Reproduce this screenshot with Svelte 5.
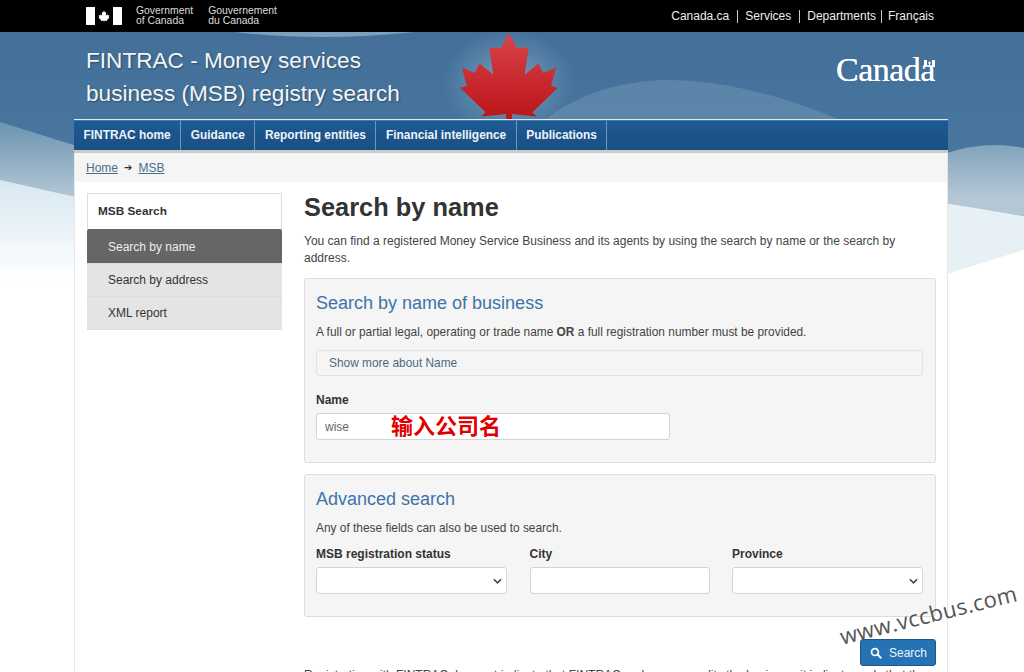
<script>
	// Top links and nav items for the FINTRAC search page
	const topLinks = ['Canada.ca', 'Services', 'Departments', 'Français'];
	const navItems = ['FINTRAC home', 'Guidance', 'Reporting entities', 'Financial intelligence', 'Publications'];
	const sideItems = ['Search by name', 'Search by address', 'XML report'];
	const leaf =
		'M50 0 L58 17 L70 17 L66 48 L80 35 L85 46 L98 40 L93 61 L100 63 L74 91 L78 96 L53 93 L53 100 L47 100 L47 93 L22 96 L26 91 L0 63 L7 61 L2 40 L15 46 L20 35 L34 48 L30 17 L42 17 Z';
</script>

<div class="page">
	<svg class="backdrop" viewBox="0 0 1024 250" aria-hidden="true">
		<defs>
			<linearGradient id="sky" x1="0" y1="0" x2="0" y2="1">
				<stop offset="0" stop-color="#436f98" />
				<stop offset="1" stop-color="#4b7ba2" />
			</linearGradient>
			<linearGradient id="band" gradientUnits="userSpaceOnUse" x1="0" y1="90" x2="0" y2="165">
				<stop offset="0" stop-color="#6b94b1" />
				<stop offset="1" stop-color="#b4c7d4" />
			</linearGradient>
			<linearGradient id="mist" gradientUnits="userSpaceOnUse" x1="0" y1="150" x2="0" y2="250">
				<stop offset="0" stop-color="#d8e8f2" />
				<stop offset="1" stop-color="#ffffff" />
			</linearGradient>
			<radialGradient id="glow">
				<stop offset="0" stop-color="#a8cbe2" stop-opacity="0.5" />
				<stop offset="1" stop-color="#a8cbe2" stop-opacity="0" />
			</radialGradient>
		</defs>
		<rect width="1024" height="190" fill="url(#sky)" />
		<ellipse cx="509" cy="50" rx="66" ry="54" fill="url(#glow)" />
		<path d="M235 0 Q320 10 415 0 Z" fill="#8eb2cc" opacity="0.75" />
		<path d="M545 88 Q590 52 660 48 Q740 46 840 88 Z" fill="#8db0ca" opacity="0.3" />
		<path d="M0 90 L80 115 L80 170 L0 150 Z" fill="url(#band)" />
		<path d="M0 148 L80 166 L80 250 L0 250 Z" fill="url(#mist)" />
		<path d="M944 122 Q985 108 1024 116 L1024 184 L944 172 Z" fill="url(#band)" />
		<path d="M944 171 L1024 184 L1024 218 L944 243 Z" fill="#e7f0f5" />
		<path d="M944 243 L1024 218 L1024 250 L944 250 Z" fill="#fff" />
	</svg>

	<div class="topbar">
		<div class="gov">
			<svg class="flag" viewBox="0 0 36 18" aria-hidden="true">
				<rect x="0" y="0" width="9" height="18" fill="#fff" />
				<rect x="27" y="0" width="9" height="18" fill="#fff" />
				<path d={leaf} fill="#fff" transform="translate(12.5 3.5) scale(0.11)" />
			</svg>
			<span>Government<br />of Canada</span>
			<span>Gouvernement<br />du Canada</span>
		</div>
		<ul class="toplinks">
			{#each topLinks as link}
				<li>{link}</li>
			{/each}
		</ul>
	</div>

	<header class="banner">
		<h2>FINTRAC - Money services<br />business (MSB) registry search</h2>
		<svg class="bigleaf" viewBox="0 0 100 100" preserveAspectRatio="none" aria-hidden="true">
			<defs>
				<linearGradient id="red" x1="0" y1="0" x2="0" y2="1">
					<stop offset="0" stop-color="#d8444a" />
					<stop offset="1" stop-color="#bb1418" />
				</linearGradient>
			</defs>
			<path d={leaf} fill="url(#red)" />
		</svg>
		<div class="wordmark">
			Canada
			<svg class="wordflag" viewBox="0 0 11 7" aria-hidden="true">
				<rect width="3" height="7" fill="#fff" />
				<rect x="8" width="3" height="7" fill="#fff" />
				<path d="M5.5 1 L7.2 3.5 L6 3.5 L6 6 L5 6 L5 3.5 L3.8 3.5 Z" fill="#fff" />
			</svg>
		</div>
	</header>

	<div class="shell">
		<nav class="mainnav">
			{#each navItems as item}
				<a href="#top">{item}</a>
			{/each}
		</nav>
		<div class="crumbs">
			<a href="#top">Home</a>
			<span class="arrow">➔</span>
			<a href="#top">MSB</a>
		</div>

		<div class="content">
			<aside class="side">
				<div class="side-title">MSB Search</div>
				{#each sideItems as item, i}
					<div class="side-item" class:active={i === 0}>{item}</div>
				{/each}
			</aside>

			<main>
				<h1>Search by name</h1>
				<p class="intro">
					You can find a registered Money Service Business and its agents by using the search by name or the search by address.
				</p>

				<section class="well first">
					<h3>Search by name of business</h3>
					<p>A full or partial legal, operating or trade name <b>OR</b> a full registration number must be provided.</p>
					<div class="more">Show more about Name</div>
					<label for="name">Name</label>
					<div class="name-wrap">
						<input id="name" type="text" value="wise" />
						<span class="note">输入公司名</span>
					</div>
				</section>

				<section class="well second">
					<h3>Advanced search</h3>
					<p>Any of these fields can also be used to search.</p>
					<div class="fields">
						<div class="field">
							<label for="status">MSB registration status</label>
							<div class="select-wrap">
								<select id="status"><option></option></select>
								<svg class="chevron" viewBox="0 0 10 6" aria-hidden="true">
									<path d="M1 1 L5 5 L9 1" fill="none" stroke="#444" stroke-width="1.7" />
								</svg>
							</div>
						</div>
						<div class="field">
							<label for="city">City</label>
							<input id="city" type="text" />
						</div>
						<div class="field">
							<label for="province">Province</label>
							<div class="select-wrap">
								<select id="province"><option></option></select>
								<svg class="chevron" viewBox="0 0 10 6" aria-hidden="true">
									<path d="M1 1 L5 5 L9 1" fill="none" stroke="#444" stroke-width="1.7" />
								</svg>
							</div>
						</div>
					</div>
				</section>

				<div class="actions">
					<button type="button">
						<svg viewBox="0 0 14 14" aria-hidden="true">
							<circle cx="5.8" cy="5.8" r="4" fill="none" stroke="#fff" stroke-width="2" />
							<path d="M8.8 8.8 L12.4 12.4" stroke="#fff" stroke-width="2.4" stroke-linecap="round" />
						</svg>
						Search
					</button>
				</div>
				<p class="legal">Registration with FINTRAC does not indicate that FINTRAC endorses or audits the business, it indicates only that the</p>
			</main>
		</div>
	</div>

	<div class="watermark">www.vccbus.com</div>
</div>

<style>
	:global(body) {
		margin: 0;
		background: #fff;
	}

	.page {
		position: relative;
		width: 1024px;
		height: 672px;
		overflow: hidden;
		font-family: 'Liberation Sans', Arial, sans-serif;
		font-size: 12px;
		color: #444;
	}

	.backdrop {
		position: absolute;
		left: 0;
		top: 32px;
		width: 1024px;
		height: 250px;
	}

	.topbar {
		position: relative;
		height: 32px;
		background: #000;
		color: #fff;
		display: flex;
		justify-content: space-between;
		padding: 0 90px 0 86px;
	}

	.gov {
		display: flex;
		align-items: center;
		font-size: 10.4px;
		line-height: 10.5px;
		color: #ddd;
	}

	.gov span {
		margin-right: 15px;
	}

	.flag {
		width: 36px;
		height: 18px;
		margin-right: 14px;
	}

	.toplinks {
		list-style: none;
		margin: 0;
		padding: 0;
		display: flex;
		align-items: center;
		font-size: 12px;
		color: #eee;
	}

	.toplinks li + li {
		border-left: 1px solid #ccc;
		margin-left: 8px;
		padding-left: 7px;
		line-height: 13px;
	}

	.toplinks li:last-child {
		margin-left: 5px;
		padding-left: 6px;
	}

	.banner {
		position: relative;
		height: 88px;
		padding-left: 86px;
	}

	.banner h2 {
		margin: 0;
		padding-top: 12px;
		font-size: 22.6px;
		font-weight: 400;
		line-height: 33px;
		color: #f2f5f7;
		text-shadow: 1px 1px 2px rgba(0, 0, 0, 0.35);
	}

	.bigleaf {
		position: absolute;
		left: 460px;
		top: 1px;
		width: 98px;
		height: 87px;
	}

	.wordmark {
		position: absolute;
		left: 836px;
		top: 19px;
		font-family: 'Liberation Serif', serif;
		font-size: 34px;
		letter-spacing: -0.5px;
		line-height: 38px;
		color: #fff;
		text-shadow: 0 0 0.6px #fff;
	}

	.wordflag {
		position: absolute;
		right: 0;
		top: 9px;
		width: 11px;
		height: 7px;
	}

	.shell {
		position: relative;
		width: 872px;
		margin-left: 75px;
		height: 552px;
		background: #fff;
		box-shadow: 0 0 0 1px #e4e8ea;
	}

	.mainnav {
		display: flex;
		margin: 0 -1px;
		height: 29px;
		background: linear-gradient(#1d5a94, #1b4f83);
		border-bottom: 3px solid #c9cccf;
		border-top: 1px solid #3d7fb5;
	}

	.mainnav a {
		padding: 0 9.5px;
		line-height: 29px;
		font-size: 11.9px;
		font-weight: 700;
		color: #eef3f7;
		text-decoration: none;
		border-right: 1px solid #6f97ba;
	}

	.crumbs {
		height: 29px;
		background: #f5f5f5;
		padding-left: 11px;
		display: flex;
		align-items: center;
		gap: 6px;
		color: #333;
	}

	.crumbs a {
		color: #4a6f8c;
	}

	.arrow {
		font-family: 'DejaVu Sans', sans-serif;
		font-size: 10px;
	}

	.content {
		display: flex;
		padding: 11px 11px 0 12px;
		gap: 22px;
	}

	.side {
		width: 195px;
		flex: none;
	}

	.side-title {
		height: 35px;
		line-height: 35px;
		padding-left: 10px;
		border: 1px solid #ddd;
		border-bottom: 2px solid #666;
		font-weight: 700;
		font-size: 11.8px;
		color: #333;
		background: #fff;
	}

	.side-item {
		height: 32px;
		line-height: 32px;
		padding-left: 21px;
		background: #e4e4e4;
		border-bottom: 1px solid #ddd;
		color: #333;
	}

	.side-item.active {
		background: #666;
		color: #eee;
	}

	main {
		flex: 1;
		min-width: 0;
	}

	h1 {
		margin: 0;
		font-size: 25.4px;
		line-height: 28px;
		font-weight: 700;
		color: #333;
	}

	.intro {
		margin: 12px 0 0;
		line-height: 17px;
	}

	.well {
		box-sizing: border-box;
		background: #f5f5f5;
		border: 1px solid #dcdcdc;
		border-radius: 3px;
		padding: 0 12px 0 11px;
	}

	.well.first {
		height: 185px;
		margin-top: 11px;
	}

	.well.second {
		height: 143px;
		margin-top: 11px;
	}

	.well h3 {
		margin: 14px 0 0;
		font-size: 18px;
		line-height: 20px;
		font-weight: 400;
		color: #3b74a8;
	}

	.well p {
		margin: 11px 0 0;
		line-height: 17px;
		font-size: 11.9px;
	}

	.more {
		height: 24px;
		line-height: 24px;
		margin-top: 9px;
		padding-left: 12px;
		border: 1px solid #e3e3e3;
		border-radius: 3px;
		color: #4e6a80;
		font-size: 11.9px;
	}

	label {
		display: block;
		font-weight: 700;
		font-size: 12px;
		color: #333;
	}

	.first label {
		margin-top: 17px;
	}

	.name-wrap {
		position: relative;
		width: 354px;
		margin-top: 6px;
	}

	input,
	select {
		display: block;
		box-sizing: border-box;
		width: 100%;
		height: 27px;
		border: 1px solid #d4d4d4;
		border-radius: 3px;
		background-color: #fff;
		padding: 0 8px;
		font: inherit;
		color: #666;
		appearance: none;
	}

	.select-wrap {
		position: relative;
	}

	.chevron {
		position: absolute;
		right: 5px;
		top: 11px;
		width: 9px;
		height: 6px;
	}

	.note {
		position: absolute;
		left: 75px;
		top: -2px;
		line-height: 26px;
		font-family: 'Noto Sans CJK SC', sans-serif;
		font-size: 22px;
		font-weight: 700;
		color: #e00000;
	}

	.fields {
		display: grid;
		grid-template-columns: 191px 180px 191px;
		justify-content: space-between;
		margin-top: 10px;
	}

	.field label {
		margin-bottom: 5px;
		line-height: 15px;
	}

	.actions {
		display: flex;
		justify-content: flex-end;
		margin-top: 22px;
	}

	button {
		display: flex;
		align-items: center;
		gap: 7px;
		height: 27px;
		padding: 0 8px 0 9px;
		background: #2572b4;
		border: 1px solid #1c578a;
		border-radius: 3px;
		color: #eef4f9;
		font: inherit;
	}

	button svg {
		width: 12px;
		height: 12px;
	}

	.legal {
		margin: 2px 0 0;
		white-space: nowrap;
		color: #444;
	}

	.watermark {
		position: absolute;
		left: 840px;
		top: 621px;
		font-family: 'Open Sans', sans-serif;
		font-size: 22px;
		color: #555;
		transform: rotate(-14deg);
		transform-origin: left center;
		letter-spacing: 0.4px;
		white-space: nowrap;
	}
</style>
